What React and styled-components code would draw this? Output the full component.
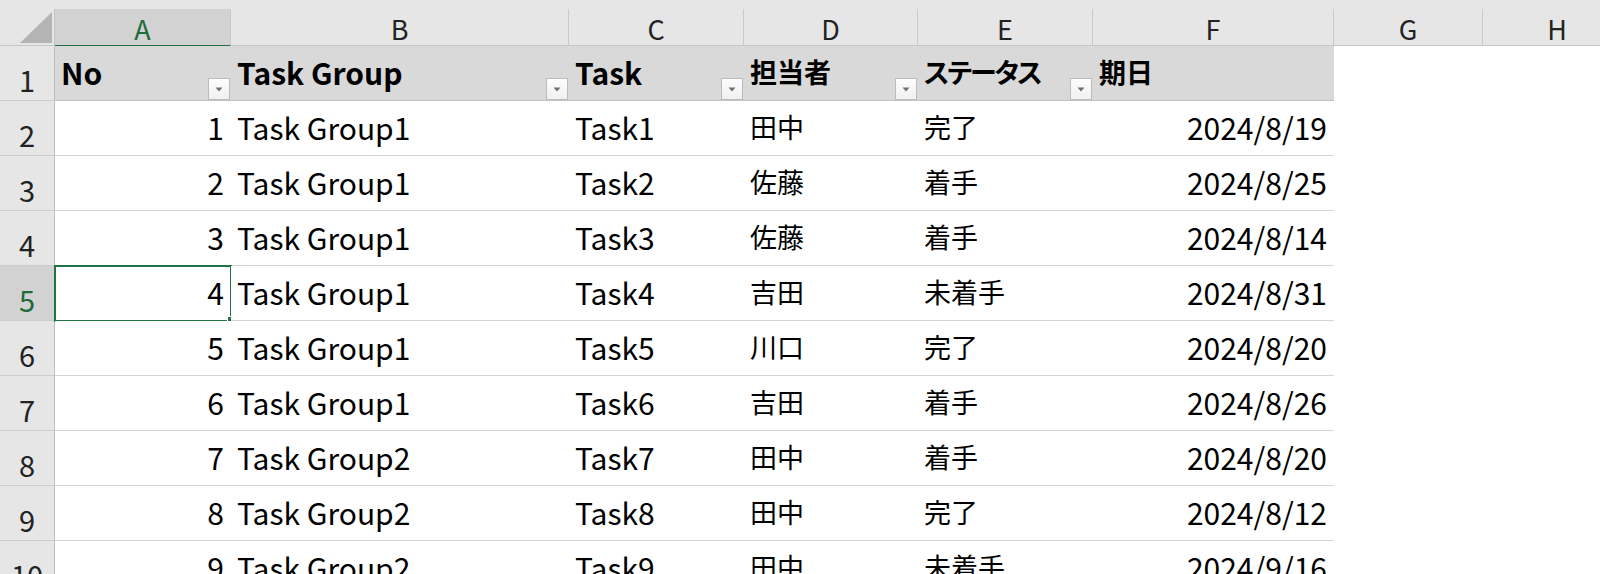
import React from 'react';
import styled, { createGlobalStyle, css } from 'styled-components';

const GlobalStyle = createGlobalStyle`
  html, body {
    margin: 0;
    padding: 0;
    background: #ffffff;
    overflow: hidden;
  }
  body {
    font-family: "Noto Sans CJK JP", "Noto Sans", sans-serif;
  }
`;

// row header, A..H, then whatever is left
const COLS = '55px 176px 338px 175px 174px 175px 241px 149px 149px 1fr';

const columns = [
  { key: 'A', label: 'No', filter: true },
  { key: 'B', label: 'Task Group', filter: true },
  { key: 'C', label: 'Task', filter: true },
  { key: 'D', label: '担当者', filter: true },
  { key: 'E', label: 'ステータス', filter: true },
  { key: 'F', label: '期日' },
];

const rows = [
  [1, 'Task Group1', 'Task1', '田中', '完了', '2024/8/19'],
  [2, 'Task Group1', 'Task2', '佐藤', '着手', '2024/8/25'],
  [3, 'Task Group1', 'Task3', '佐藤', '着手', '2024/8/14'],
  [4, 'Task Group1', 'Task4', '吉田', '未着手', '2024/8/31'],
  [5, 'Task Group1', 'Task5', '川口', '完了', '2024/8/20'],
  [6, 'Task Group1', 'Task6', '吉田', '着手', '2024/8/26'],
  [7, 'Task Group2', 'Task7', '田中', '着手', '2024/8/20'],
  [8, 'Task Group2', 'Task8', '田中', '完了', '2024/8/12'],
  [9, 'Task Group2', 'Task9', '田中', '未着手', '2024/9/16'],
];

const SELECTED_ROW = 5;
const isJp = (v) => /[\u3040-\u30ff\u4e00-\u9fff]/.test(String(v));
const isKana = (v) => /[\u30a0-\u30ff]/.test(String(v));

const Sheet = styled.div`
  width: 1600px;
  height: 574px;
  overflow: hidden;
  background: #ffffff;
`;

const TopStrip = styled.div`
  height: 9px;
  background: #e6e6e6;
`;

const HeaderBar = styled.div`
  display: grid;
  grid-template-columns: ${COLS};
  height: 37px;
  background: #e6e6e6;
`;

const Corner = styled.div`
  display: flex;
  align-items: flex-end;
  justify-content: flex-end;
  padding: 0 2px 2px 0;
  border-right: 1px solid #c6c6c6;
  border-bottom: 1px solid #c6c6c6;
`;

const ColLetter = styled.div`
  display: flex;
  align-items: center;
  justify-content: center;
  padding-top: 3px;
  font-size: 27px;
  line-height: 1;
  color: ${(p) => (p.$active ? '#1e6b3c' : '#222222')};
  background: ${(p) => (p.$active ? '#d2d2d2' : '#e6e6e6')};
  border-right: 1px solid #c9c9c9;
  border-bottom: ${(p) => (p.$active ? '1px solid #217346' : '1px solid #c6c6c6')};
`;

const Filler = styled.div`
  background: ${(p) => (p.$bar ? '#e6e6e6' : '#ffffff')};
  ${(p) => p.$bar && css`border-bottom: 1px solid #c6c6c6;`}
`;

const Row = styled.div`
  display: grid;
  grid-template-columns: ${COLS};
  height: 55px;
`;

const RowNumber = styled.div`
  display: flex;
  align-items: flex-end;
  justify-content: center;
  padding-bottom: 6px;
  font-size: 29px;
  line-height: 1;
  color: ${(p) => (p.$active ? '#1e6b3c' : '#222222')};
  background: ${(p) => (p.$active ? '#d2d2d2' : '#e6e6e6')};
  border-right: 1px solid #bdbdbd;
  border-bottom: 1px solid #cdcdcd;
`;

const Cell = styled.div`
  position: relative;
  display: flex;
  align-items: center;
  justify-content: ${(p) => (p.$align === 'right' ? 'flex-end' : 'flex-start')};
  padding: 0 7px 3px 6px;
  font-size: ${(p) => (p.$jp ? '27px' : '30px')};
  letter-spacing: ${(p) => (p.$kana ? '-2px' : '0')};
  line-height: 1;
  font-feature-settings: "palt";
  color: #000000;
  white-space: nowrap;
  background: ${(p) => (p.$head ? '#d9d9d9' : '#ffffff')};
  border-bottom: 1px solid ${(p) => (p.$head ? '#c3c3c3' : '#d4d4d4')};
  ${(p) => p.$head && css`font-weight: 700;`}
  ${(p) =>
    p.$selected &&
    css`
      outline: 2px solid #217346;
      outline-offset: -1px;
      &::after {
        content: '';
        position: absolute;
        right: -3px;
        bottom: -3px;
        width: 5px;
        height: 5px;
        background: #217346;
        border: 1px solid #ffffff;
      }
    `}
`;

const FilterButton = styled.div`
  position: absolute;
  right: 1px;
  bottom: 0;
  width: 22px;
  height: 22px;
  box-sizing: border-box;
  display: flex;
  align-items: center;
  justify-content: center;
  background: linear-gradient(#fdfdfd, #f0f0f0);
  border: 1px solid #bcbcbc;
`;

const Arrow = () => (
  <svg width="8" height="5" viewBox="0 0 8 5">
    <path d="M0.5 0.5 L7.5 0.5 L4 4.5 Z" fill="#707070" />
  </svg>
);

const CornerTriangle = () => (
  <svg width="32" height="31" viewBox="0 0 32 31">
    <path d="M0 31 L32 0 L32 31 Z" fill="#b4b4b4" />
  </svg>
);

export default function App() {
  return (
    <>
      <GlobalStyle />
      <Sheet>
        <TopStrip />
        <HeaderBar>
          <Corner>
            <CornerTriangle />
          </Corner>
          {['A', 'B', 'C', 'D', 'E', 'F', 'G', 'H'].map((l) => (
            <ColLetter key={l} $active={l === 'A'}>
              {l}
            </ColLetter>
          ))}
          <Filler $bar />
        </HeaderBar>

        <Row>
          <RowNumber>1</RowNumber>
          {columns.map((c) => (
            <Cell key={c.key} $head $jp={isJp(c.label)} $kana={isKana(c.label)}>
              {c.label}
              {c.filter && (
                <FilterButton>
                  <Arrow />
                </FilterButton>
              )}
            </Cell>
          ))}
          <Filler />
          <Filler />
          <Filler />
        </Row>

        {rows.map((r, i) => {
          const rowNo = i + 2;
          return (
            <Row key={rowNo}>
              <RowNumber $active={rowNo === SELECTED_ROW}>{rowNo}</RowNumber>
              {r.map((v, j) => (
                <Cell
                  key={j}
                  $jp={isJp(v)}
                  $align={j === 0 || j === 5 ? 'right' : 'left'}
                  $selected={rowNo === SELECTED_ROW && j === 0}
                >
                  {v}
                </Cell>
              ))}
              <Filler />
              <Filler />
              <Filler />
            </Row>
          );
        })}
      </Sheet>
    </>
  );
}
